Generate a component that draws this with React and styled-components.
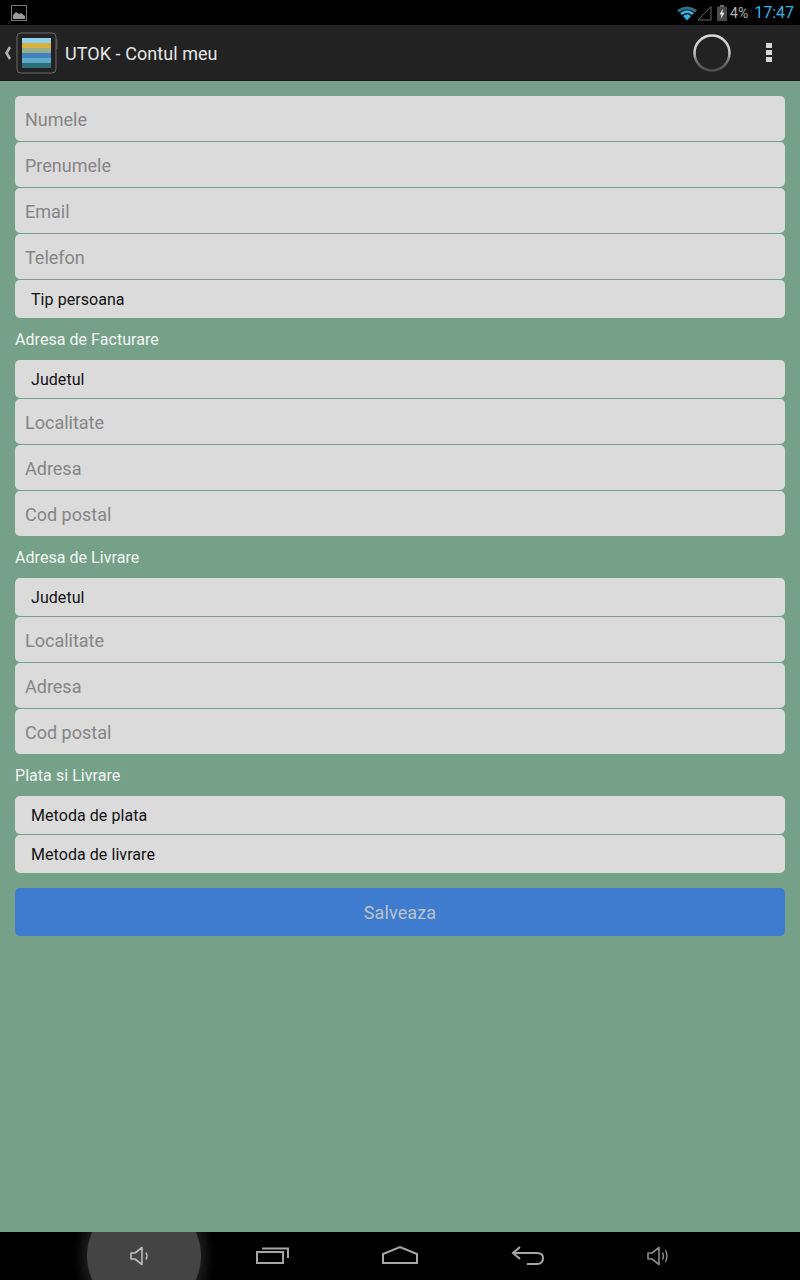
import React from 'react'
import styled, { createGlobalStyle } from 'styled-components'

const GlobalStyle = createGlobalStyle`
    html, body {
        margin: 0;
        padding: 0;
        background: #74a188;
    }
    body {
        font-family: Roboto, "Liberation Sans", sans-serif;
    }
    * {
        box-sizing: border-box;
    }
`

const sections = [
    {
        title: 'Adresa de Facturare',
        fields: [
            { kind: 'select', text: 'Judetul' },
            { kind: 'input', text: 'Localitate' },
            { kind: 'input', text: 'Adresa' },
            { kind: 'input', text: 'Cod postal' },
        ],
    },
    {
        title: 'Adresa de Livrare',
        fields: [
            { kind: 'select', text: 'Judetul' },
            { kind: 'input', text: 'Localitate' },
            { kind: 'input', text: 'Adresa' },
            { kind: 'input', text: 'Cod postal' },
        ],
    },
    {
        title: 'Plata si Livrare',
        fields: [
            { kind: 'select', text: 'Metoda de plata' },
            { kind: 'select', text: 'Metoda de livrare' },
        ],
    },
]

const personal = [
    { kind: 'input', text: 'Numele' },
    { kind: 'input', text: 'Prenumele' },
    { kind: 'input', text: 'Email' },
    { kind: 'input', text: 'Telefon' },
    { kind: 'select', text: 'Tip persoana' },
]

function Fields({ fields }) {
    return (
        <FieldGroup>
            {fields.map((field, index) =>
                field.kind === 'select' ? (
                    <SelectBox key={index}>{field.text}</SelectBox>
                ) : (
                    <TextInput key={index} type="text" placeholder={field.text} />
                )
            )}
        </FieldGroup>
    )
}

function StatusBar() {
    return (
        <StatusWrap>
            <svg width="16" height="16" viewBox="0 0 16 16">
                <rect x="0.5" y="0.5" width="15" height="15" fill="none" stroke="#777" />
                <path d="M2 14 V10 L5 7 L8 9 L10 8 L14 11 V14 Z" fill="#9a9a9a" />
            </svg>
            <StatusRight>
                <svg width="22" height="16" viewBox="-1.5 0 22 16">
                    <path d="M0.5 5 Q10.5 -2 20.5 5 L18.5 7.5 Q10.5 1.5 2.5 7.5 Z" fill="#33708a" />
                    <path d="M3.5 8 Q10.5 2.5 17.5 8 L15.5 10 Q10.5 6 5.5 10 Z" fill="#33b5e5" />
                    <path d="M6.5 11 Q10.5 7.5 14.5 11 L10.5 15.5 Z" fill="#33b5e5" />
                </svg>
                <SignalIcon width="15" height="16" viewBox="0 0 15 16">
                    <path d="M14 1.5 V15 H1 Z" fill="none" stroke="#666" strokeWidth="1" />
                </SignalIcon>
                <BatteryIcon width="10" height="16" viewBox="0 0 10 16">
                    <rect x="0" y="1.5" width="10" height="14.5" fill="#4a4a4a" />
                    <rect x="3" y="0" width="4" height="2" fill="#6a6a6a" />
                    <path d="M6 3.5 L2.5 9.5 H4.6 L3.8 14 L7.5 7.8 H5.3 Z" fill="#e8e8e8" />
                </BatteryIcon>
                <Percent>4%</Percent>
                <Clock>17:47</Clock>
            </StatusRight>
        </StatusWrap>
    )
}

function ActionBar() {
    return (
        <ActionWrap>
            <BackChevron width="8" height="14" viewBox="0 0 8 14">
                <path d="M6 1 L2.5 7 L6 13" fill="none" stroke="#b0b0b0" strokeWidth="2.6" />
            </BackChevron>
            <svg width="42" height="42" viewBox="0 0 42 42">
                <rect x="1" y="1" width="39" height="40" rx="4" fill="#222" stroke="#6a6a6a" strokeWidth="1" />
                <rect x="40" y="7" width="1.5" height="10" fill="#555" />
                <rect x="6" y="6" width="29" height="5" fill="#8fd0ec" />
                <rect x="6" y="11" width="29" height="5" fill="#d8b13c" />
                <rect x="6" y="16" width="29" height="5" fill="#9aae8c" />
                <rect x="6" y="21" width="29" height="5" fill="#3f82c0" />
                <rect x="6" y="26" width="29" height="5" fill="#5fa8c8" />
                <rect x="6" y="31" width="29" height="5" fill="#2d6f78" />
            </svg>
            <AppTitle>UTOK - Contul meu</AppTitle>
            <ActionRight>
                <svg width="40" height="40" viewBox="0 0 40 40">
                    <defs>
                        <linearGradient id="spin" x1="0" y1="0" x2="0" y2="1">
                            <stop offset="0" stopColor="#d8d8d8" />
                            <stop offset="0.5" stopColor="#c4c4c4" />
                            <stop offset="0.7" stopColor="#777" />
                            <stop offset="1" stopColor="#4c4c4c" />
                        </linearGradient>
                    </defs>
                    <circle cx="20" cy="20" r="17.5" fill="none" stroke="url(#spin)" strokeWidth="2.5" />
                </svg>
                <MenuDots>
                    <span />
                    <span />
                    <span />
                </MenuDots>
            </ActionRight>
        </ActionWrap>
    )
}

function NavBar() {
    return (
        <NavWrap>
            <NavGlow />
            <NavIcon $left={129}>
                <svg width="22" height="22" viewBox="0 0 22 22">
                    <path d="M2 8 H6 L13 2.5 V19.5 L6 14 H2 Z" fill="none" stroke="#bdbdbd" strokeWidth="1.6" strokeLinejoin="round" />
                    <path d="M17 7.5 Q19 11 17 14.5" fill="none" stroke="#bdbdbd" strokeWidth="1.4" />
                </svg>
            </NavIcon>
            <NavIcon $left={255}>
                <svg width="36" height="20" viewBox="0 0 36 20">
                    <rect x="2" y="7" width="26" height="11" fill="none" stroke="#a6a6a6" strokeWidth="2" />
                    <path d="M7 3.5 H33 V13" fill="none" stroke="#a6a6a6" strokeWidth="2" />
                </svg>
            </NavIcon>
            <NavIcon $left={381}>
                <svg width="38" height="20" viewBox="0 0 38 20">
                    <path d="M2 18 H36 V9 L19 2 L2 9 Z" fill="none" stroke="#a6a6a6" strokeWidth="2" />
                </svg>
            </NavIcon>
            <NavIcon $left={511}>
                <svg width="34" height="22" viewBox="0 0 34 22">
                    <path d="M9 2 L2 8 L9 14" fill="none" stroke="#a6a6a6" strokeWidth="2" />
                    <path d="M2 8 H26 Q32 8 32 13 Q32 19 26 19 H16" fill="none" stroke="#a6a6a6" strokeWidth="2" />
                </svg>
            </NavIcon>
            <NavIcon $left={646}>
                <svg width="24" height="22" viewBox="0 0 24 22">
                    <path d="M2 8 H6 L13 2.5 V19.5 L6 14 H2 Z" fill="none" stroke="#8a8a8a" strokeWidth="1.6" strokeLinejoin="round" />
                    <path d="M16.5 7.5 Q18.5 11 16.5 14.5" fill="none" stroke="#8a8a8a" strokeWidth="1.4" />
                    <path d="M19.5 5 Q22.5 11 19.5 17" fill="none" stroke="#8a8a8a" strokeWidth="1.4" />
                </svg>
            </NavIcon>
        </NavWrap>
    )
}

function App() {
    return (
        <>
            <GlobalStyle />
            <Screen>
                <StatusBar />
                <ActionBar />
                <Content>
                    <Fields fields={personal} />
                    {sections.map(section => (
                        <React.Fragment key={section.title}>
                            <SectionTitle>{section.title}</SectionTitle>
                            <Fields fields={section.fields} />
                        </React.Fragment>
                    ))}
                    <SaveButton type="button">Salveaza</SaveButton>
                </Content>
                <NavBar />
            </Screen>
        </>
    )
}

const Screen = styled.div`
    width: 800px;
    height: 1280px;
    display: flex;
    flex-direction: column;
    background: #74a188;
    overflow: hidden;
`

const StatusWrap = styled.div`
    height: 25px;
    flex: none;
    background: #000;
    display: flex;
    align-items: center;
    justify-content: space-between;
    padding: 0 6px 0 11px;
`

const StatusRight = styled.div`
    display: flex;
    align-items: center;
`

const SignalIcon = styled.svg`
    margin-left: 0;
`

const BatteryIcon = styled.svg`
    margin-left: 5px;
`

const Percent = styled.span`
    color: #b4b4b4;
    font-size: 14px;
    margin-left: 3px;
`

const Clock = styled.span`
    color: #33b5e5;
    font-size: 16px;
    margin-left: 6px;
`

const ActionWrap = styled.div`
    height: 56px;
    flex: none;
    background: #222;
    border-bottom: 1px solid #1a1a1a;
    display: flex;
    align-items: center;
    padding-left: 4px;
    gap: 4px;
`

const BackChevron = styled.svg`
    flex: none;
`

const AppTitle = styled.div`
    color: #e6e6e6;
    font-size: 18px;
    letter-spacing: 0.06px;
    margin-left: 3px;
    padding-top: 2px;
`

const ActionRight = styled.div`
    margin-left: auto;
    display: flex;
    align-items: center;
    padding-right: 28px;
    gap: 34px;
`

const MenuDots = styled.div`
    display: flex;
    flex-direction: column;
    gap: 2px;

    span {
        width: 6px;
        height: 5px;
        background: #d6d6d6;
    }
`

const Content = styled.div`
    flex: 1;
    display: flex;
    flex-direction: column;
    padding: 15px 15px 0;
`

const FieldGroup = styled.div`
    display: flex;
    flex-direction: column;
    gap: 1px;
`

const TextInput = styled.input`
    height: 45px;
    width: 100%;
    border: none;
    outline: none;
    border-radius: 5px;
    background: #dcdbdc;
    padding: 2px 10px 0;
    font-family: inherit;
    font-size: 18px;

    &::placeholder {
        color: #858585;
        opacity: 1;
    }
`

const SelectBox = styled.div`
    height: 38px;
    border-radius: 5px;
    background: #dcdbdc;
    padding-left: 16px;
    display: flex;
    align-items: center;
    color: #111;
    font-size: 16px;
    letter-spacing: 0.06px;
`

const SectionTitle = styled.div`
    height: 42px;
    padding-top: 1px;
    display: flex;
    align-items: center;
    color: #f4f8f5;
    font-size: 16px;
    letter-spacing: 0.05px;
`

const SaveButton = styled.button`
    height: 48px;
    width: 100%;
    margin-top: 15px;
    border: none;
    border-radius: 5px;
    background: #3f7bce;
    color: #b9c4cf;
    font-family: inherit;
    font-size: 18px;
    letter-spacing: 0.1px;
`

const NavWrap = styled.div`
    height: 48px;
    flex: none;
    background: #000;
    position: relative;
    overflow: hidden;
`

const NavGlow = styled.div`
    position: absolute;
    left: 87px;
    top: -33px;
    width: 114px;
    height: 114px;
    border-radius: 50%;
    background: #444;
    box-shadow: 0 0 14px 4px rgba(110, 110, 110, 0.35);
`

const NavIcon = styled.div`
    position: absolute;
    left: ${props => props.$left}px;
    top: 13px;
    line-height: 0;
`

export default App
